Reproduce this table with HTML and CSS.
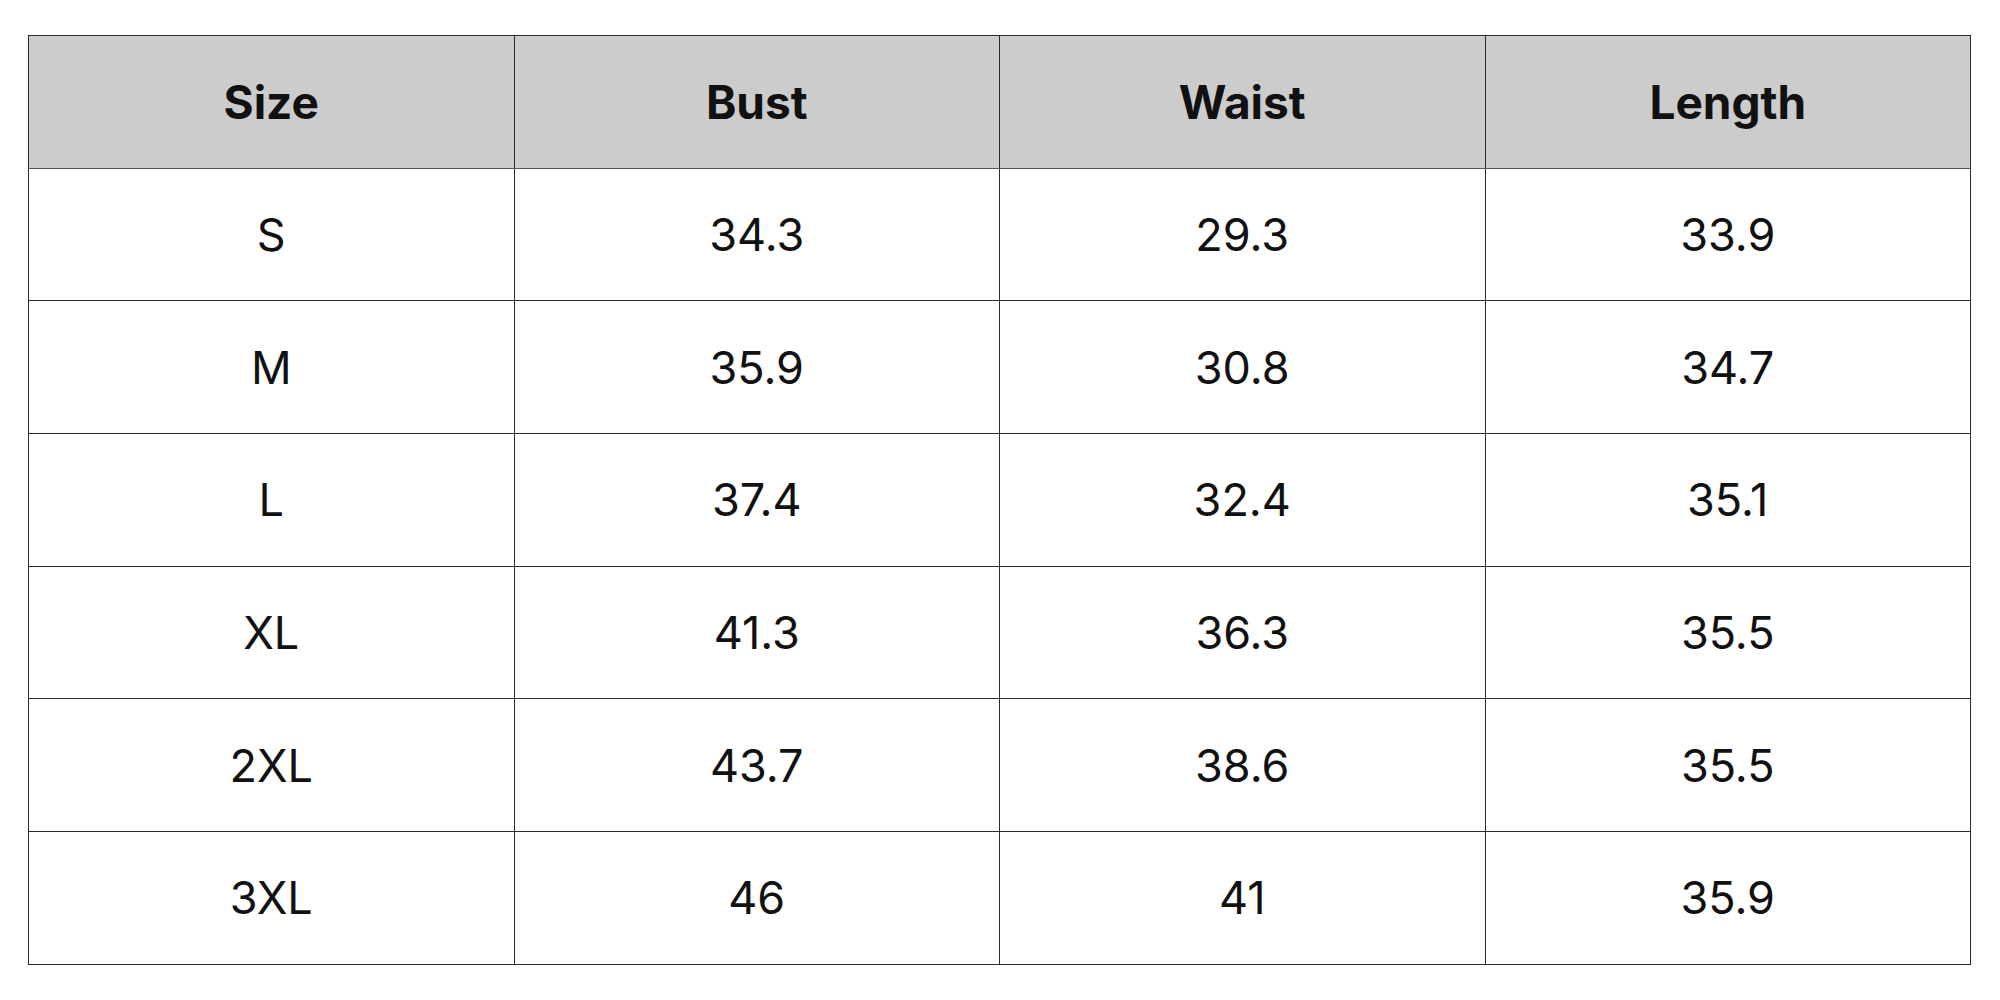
FILE: index.html
```html
<!DOCTYPE html>
<html>
<head>
<meta charset="utf-8">
<link rel="stylesheet" href="styles.css">
</head>
<body>
<table class="size-table">
  <thead>
    <tr><th>Size</th><th>Bust</th><th>Waist</th><th>Length</th></tr>
  </thead>
  <tbody>
    <tr><td>S</td><td>34.3</td><td>29.3</td><td>33.9</td></tr>
    <tr><td>M</td><td>35.9</td><td>30.8</td><td>34.7</td></tr>
    <tr><td>L</td><td>37.4</td><td>32.4</td><td>35.1</td></tr>
    <tr><td>XL</td><td>41.3</td><td>36.3</td><td>35.5</td></tr>
    <tr><td>2XL</td><td>43.7</td><td>38.6</td><td>35.5</td></tr>
    <tr><td>3XL</td><td>46</td><td>41</td><td>35.9</td></tr>
  </tbody>
</table>
</body>
</html>
```
FILE: styles.css
```css
html, body {
  margin: 0;
  padding: 0;
  background: #ffffff;
}
body {
  padding: 35px 0 0 28px;
  font-family: Inter, "Open Sans", "Liberation Sans", sans-serif;
  color: #111111;
}
.size-table {
  border-collapse: collapse;
  table-layout: fixed;
  width: 1943px;
  border: 1px solid #1a1a1a;
}
.size-table th,
.size-table td {
  border: 1px solid #2a2a2a;
  height: 131.7px;
  padding: 0;
  text-align: center;
  vertical-align: middle;
  font-size: 45px;
  line-height: 1;
}
.size-table th {
  background: #cccccc;
  font-size: 46px;
  font-weight: 700;
  border-bottom-color: #555555;
}
.size-table td {
  font-weight: 400;
}
```
